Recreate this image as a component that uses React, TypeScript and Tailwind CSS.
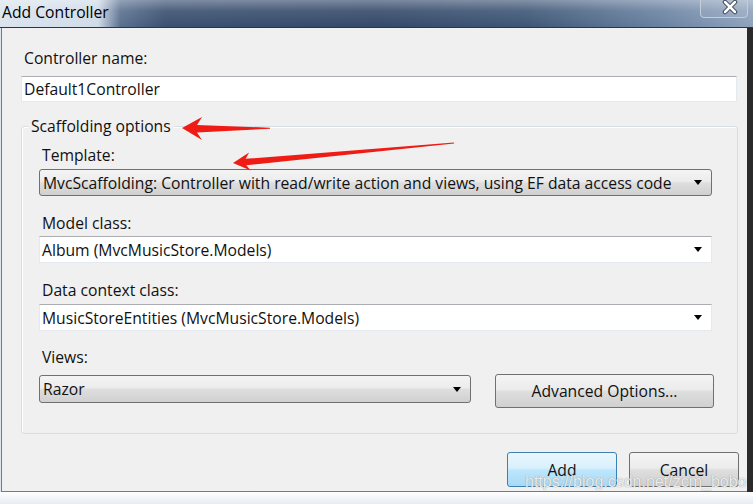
import React from "react";

const font = "font-['Open_Sans',sans-serif]";

function Arrow() {
  return (
    <svg width="8" height="5" viewBox="0 0 8 5" className="shrink-0">
      <polygon points="0,0 8,0 4,5" fill="#000" />
    </svg>
  );
}

function GrayCombo({ text, className }: { text: string; className: string }) {
  return (
    <div
      className={`flex items-center justify-between rounded-[3px] border border-[#707070] bg-[linear-gradient(#f4f4f4_0%,#ececec_45%,#dedede_52%,#d0d0d0_100%)] pl-[3px] pr-[9px] ${className}`}
    >
      <span className="whitespace-nowrap">{text}</span>
      <Arrow />
    </div>
  );
}

function WhiteCombo({ text }: { text: string }) {
  return (
    <div className="flex h-[27px] w-[673px] items-center justify-between border border-[#e3e9ef] border-t-[#abadb3] bg-white pl-[2px] pr-[9px]">
      <span className="whitespace-nowrap">{text}</span>
      <Arrow />
    </div>
  );
}

function Btn({ text, className, primary }: { text: string; className: string; primary?: boolean }) {
  return (
    <div
      className={`flex items-center justify-center rounded-[3px] border ${
        primary
          ? "border-[#3c7fb1] bg-[linear-gradient(#eaf6fd_0%,#d9f0fc_45%,#bee6fd_52%,#a7d9f5_100%)]"
          : "border-[#707070] bg-[linear-gradient(#f4f4f4_0%,#ececec_45%,#dedede_52%,#d0d0d0_100%)]"
      } ${className}`}
    >
      {text}
    </div>
  );
}

export default function App() {
  return (
    <div className={`relative h-[504px] w-[753px] overflow-hidden bg-[#e9eef4] text-[15.7px] leading-[20px] text-[#111] ${font}`}>
      {/* title bar */}
      <div className="relative h-[28px] border-b border-[#2a3644] bg-[linear-gradient(90deg,#dbe4ee_0%,#cfdbe8_13%,#5a7090_16%,#3a5070_22%,#34496a_50%,#3e5676_70%,#6a82a2_88%,#8ea2bc_100%)]">
        <div className="absolute inset-0 bg-[linear-gradient(rgba(255,255,255,0.35)_0%,rgba(255,255,255,0.1)_40%,rgba(255,255,255,0)_100%)]" />
        <div className="absolute left-[2px] top-[2px] text-[15.7px] leading-[20px] text-black">Add Controller</div>
        <div className="absolute left-[700px] top-[-2px] h-[20px] w-[48px] rounded-b-[4px] border border-[#c5ced8] bg-[rgba(255,255,255,0.08)]">
          <svg width="48" height="20" viewBox="0 0 48 20" className="absolute left-0 top-0">
            <g stroke="#3a4656" strokeWidth="4.5" strokeLinecap="round">
              <line x1="24" y1="3" x2="34" y2="13" />
              <line x1="34" y1="3" x2="24" y2="13" />
            </g>
            <g stroke="#ffffff" strokeWidth="2.5" strokeLinecap="round">
              <line x1="24" y1="3" x2="34" y2="13" />
              <line x1="34" y1="3" x2="24" y2="13" />
            </g>
          </svg>
        </div>
      </div>

      <div className="flex h-[464px]">
        <div className="w-[2px] border-r border-[#7a7a7a] bg-[#dfe6ee]" />
        <div className="flex w-[745px] flex-col border-b border-[#7a7a7a] bg-[#f0f0f0]">
          <div className="ml-[22px] mt-[20px]">Controller name:</div>
          <div className="ml-[19px] mt-[8px] flex h-[26px] w-[716px] items-center border border-[#e3e9ef] border-t-[#abadb3] bg-white pl-[2px]">
            Default1Controller
          </div>

          {/* group box */}
          <div className="relative ml-[19px] mt-[24px] h-[308px] w-[717px] rounded-[3px] border border-[#d5dfe5] shadow-[inset_1px_1px_0_#ffffff]">
            <div className="absolute left-[6px] top-[-11px] bg-[#f0f0f0] px-[3px]">Scaffolding options</div>
            <div className="flex flex-col pl-[17px]">
              <div className="ml-[3px] mt-[18px]">Template:</div>
              <GrayCombo
                className="mt-[4px] h-[27px] w-[673px]"
                text="MvcScaffolding: Controller with read/write action and views, using EF data access code"
              />
              <div className="ml-[3px] mt-[17px]">Model class:</div>
              <div className="mt-[3px]">
                <WhiteCombo text="Album (MvcMusicStore.Models)" />
              </div>
              <div className="ml-[3px] mt-[17px]">Data context class:</div>
              <div className="mt-[4px]">
                <WhiteCombo text="MusicStoreEntities (MvcMusicStore.Models)" />
              </div>
              <div className="ml-[3px] mt-[16px]">Views:</div>
              <div className="mt-[7px] flex items-start">
                <GrayCombo className="mt-[1px] h-[28px] w-[432px]" text="Razor" />
                <Btn className="ml-[24px] h-[34px] w-[219px]" text="Advanced Options..." />
              </div>
            </div>
          </div>

          <div className="mt-[18px] flex justify-end pr-[8px]">
            <Btn primary className="h-[35px] w-[110px]" text="Add" />
            <Btn className="ml-[12px] h-[35px] w-[110px]" text="Cancel" />
          </div>
        </div>
        <div className="w-[6px] bg-[#2a2a2a]" />
      </div>
      <div className="h-[12px] bg-[linear-gradient(#ffffff,#e6ecf2)]" />

      {/* watermark */}
      <div className="pointer-events-none absolute left-[525px] top-[472px] font-['Liberation_Sans',sans-serif] text-[16px] leading-[20px] text-[rgba(255,255,255,0.85)] [text-shadow:0_0_1px_#7a7a7a]">
        https://blog.csdn.net/zcm_bobo
      </div>

      {/* red annotation arrows */}
      <svg className="pointer-events-none absolute left-0 top-0" width="753" height="504">
        <g transform="translate(182,128)">
          <polygon points="0,0 20,-11 15,-3 88,-0.3 88,0.8 15,4.5 20,12" fill="#ee1c14" />
        </g>
        <g transform="translate(233,163) rotate(-5.2)">
          <polygon points="0,0 17,-9 13,-3 222,-0.5 222,0.6 13,3.5 17,9" fill="#ee1c14" />
        </g>
      </svg>
    </div>
  );
}
